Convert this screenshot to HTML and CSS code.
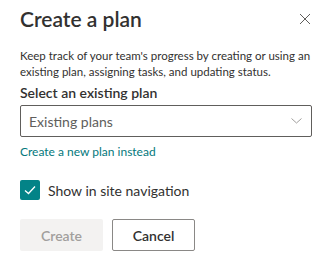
FILE: index.html
```html
<!DOCTYPE html>
<html lang="en">
<head>
    <meta charset="UTF-8">
    <title>Create a plan</title>
    <link rel="stylesheet" href="styles.css">
</head>
<body>
    <div class="panel">
        <div class="header">
            <h1>Create a plan</h1>
            <button class="close" aria-label="Close">
                <svg width="12" height="12" viewBox="0 0 12 12"><path d="M1 1 L11 11 M11 1 L1 11" stroke="#605e5c" stroke-width="1" fill="none"/></svg>
            </button>
        </div>
        <p class="desc">Keep track of your team's progress by creating or using an existing plan, assigning tasks, and updating status.</p>
        <label class="field-label">Select an existing plan</label>
        <div class="dropdown">
            <span>Existing plans</span>
            <svg width="11" height="6" viewBox="0 0 11 6"><path d="M0.5 0.5 L5.5 5 L10.5 0.5" stroke="#a19f9d" stroke-width="1" fill="none"/></svg>
        </div>
        <a class="link" href="#">Create a new plan instead</a>
        <div class="check-row">
            <span class="checkbox">
                <svg width="12" height="10" viewBox="0 0 12 10"><path d="M1 5.5 L4.5 8.5 L11 1.5" stroke="#fff" stroke-width="1.3" fill="none"/></svg>
            </span>
            <span>Show in site navigation</span>
        </div>
        <div class="actions">
            <button class="btn btn-disabled">Create</button>
            <button class="btn btn-default">Cancel</button>
        </div>
    </div>
</body>
</html>
```

FILE: styles.css
```css
body {
    margin: 0;
    background: #fff;
    font-family: "Segoe UI", Lato, sans-serif;
    color: #323130;
}
.panel {
    width: 292px;
    padding: 4px 20px 0 20px;
}
.header {
    display: flex;
    justify-content: space-between;
    align-items: center;
    height: 30px;
}
h1 {
    margin: 0;
    font-size: 21px;
    font-weight: 600;
    line-height: 28px;
}
.close {
    border: none;
    background: none;
    padding: 0;
    width: 14px;
    height: 14px;
    display: flex;
    align-items: center;
    justify-content: center;
}
.desc {
    margin: 14px 0 0 0;
    font-size: 11.5px;
    line-height: 16px;
    color: #323130;
}
.field-label {
    display: block;
    margin-top: 3px;
    font-size: 14px;
    font-weight: 600;
    line-height: 20px;
}
.dropdown {
    margin-top: 2px;
    height: 30px;
    border: 1px solid #605e5c;
    border-radius: 2px;
    display: flex;
    align-items: center;
    justify-content: space-between;
    padding: 0 9px 0 8px;
    font-size: 14px;
    color: #605e5c;
}
.link {
    display: block;
    margin-top: 6px;
    font-size: 12px;
    line-height: 18px;
    color: #03787c;
    text-decoration: none;
}
.check-row {
    display: flex;
    align-items: center;
    gap: 8px;
    margin-top: 19px;
    font-size: 14px;
}
.checkbox {
    width: 20px;
    height: 20px;
    border-radius: 2px;
    background: #038387;
    display: flex;
    align-items: center;
    justify-content: center;
}
.actions {
    display: flex;
    gap: 9px;
    margin-top: 19px;
}
.btn {
    height: 32px;
    width: 83px;
    font-family: inherit;
    font-size: 14px;
    font-weight: 600;
    border-radius: 2px;
}
.btn-disabled {
    background: #f3f2f1;
    border: none;
    color: #a19f9d;
}
.btn-default {
    background: #fff;
    border: 1px solid #8a8886;
    color: #323130;
}
```
